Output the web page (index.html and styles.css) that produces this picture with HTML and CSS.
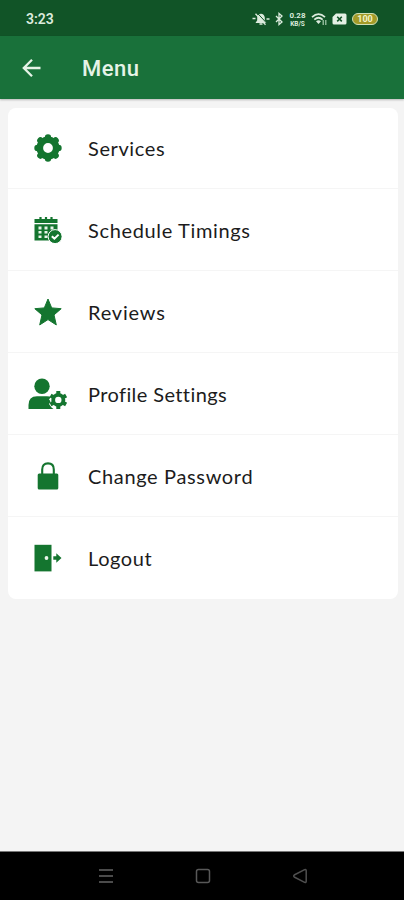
FILE: index.html
```html
<!DOCTYPE html>
<html lang="en">
<head>
	<meta charset="utf-8">
	<meta name="viewport" content="width=device-width, initial-scale=1">
	<title>Menu</title>
	<link rel="stylesheet" href="styles.css">
</head>
<body>
	<div class="statusbar">
		<span class="time">3:23</span>
		<div class="status-icons">
			<svg width="18" height="14" viewBox="0 0 18 14">
				<path d="M3.5 11L5.2 8.2V5.5C5.5 3.2 7 1.8 9 1.8S12.5 3.2 12.8 5.5V8.2L14.5 11Z" fill="#dcebdd"/>
				<path d="M7.5 12H10.5M0.5 6.5H3.5M14.5 7H17.5" stroke="#dcebdd" stroke-width="1.7"/>
				<path d="M6 1.8L15.5 12" stroke="#115427" stroke-width="1"/>
				<path d="M3.5 1.8L13.5 12.8" stroke="#dcebdd" stroke-width="1.3"/>
			</svg>
			<svg class="bluetooth" width="8" height="14" viewBox="0 0 8 14">
				<path d="M1 4L7 10L4 12.5V1.5L7 4L1 10" fill="none" stroke="#dcebdd" stroke-width="1.3"/>
			</svg>
			<div class="speed"><span>0.28</span><span>KB/S</span></div>
			<svg class="wifi" width="17" height="14" viewBox="0 0 17 14">
				<path d="M1 5.2Q7.5 -1 14 5.2M3.3 7.7Q7.5 3.8 11.7 7.7" fill="none" stroke="#dcebdd" stroke-width="1.7"/>
				<path d="M5 9.2Q7.5 7.2 10 9.2L7.5 12Z" fill="#dcebdd"/>
				<path d="M12.2 8V13M14.8 8V13" stroke="#a9cdb1" stroke-width="1.2"/>
			</svg>
			<svg class="sim" width="15" height="12" viewBox="0 0 15 12">
				<path d="M4 0.5H13Q14.5 0.5 14.5 2V10Q14.5 11.5 13 11.5H2Q0.5 11.5 0.5 10V4Z" fill="#e4f0e4"/>
				<path d="M5.2 3.8L9.8 8.4M9.8 3.8L5.2 8.4" stroke="#115427" stroke-width="1.6"/>
			</svg>
			<div class="battery">100</div>
		</div>
	</div>
	<header class="appbar">
		<svg class="back" width="20" height="20" viewBox="0 0 20 20">
			<path d="M18.5 10H2M10 1.8L1.8 10L10 18.2" fill="none" stroke="#e6f3e7" stroke-width="2.3"/>
		</svg>
		<h1>Menu</h1>
	</header>
	<main>
		<ul class="menu">
			<li>
				<span class="icon">
					<svg width="28" height="28" viewBox="-14 -14 28 28">
						<g fill="none" stroke="#14752f">
							<circle r="8.2" stroke-width="6.6"/>
							<g stroke-width="6.4" stroke-linecap="round" stroke-linejoin="round">
								<path d="M0 -10V-10.5M0 10V10.5M-10 0H-10.5M10 0H10.5M-7.2 -7.2L-7.6 -7.6M7.2 -7.2L7.6 -7.6M-7.2 7.2L-7.6 7.6M7.2 7.2L7.6 7.6"/>
							</g>
						</g>
					</svg>
				</span>
				<span class="label services">Services</span>
			</li>
			<li>
				<span class="icon">
					<svg width="28" height="28" viewBox="0 0 28 28">
						<path d="M0.5 3H23.5V7H0.5ZM0.5 8.2H23.5V24.5H0.5Z" fill="#14752f"/>
						<path d="M6.5 1V4M12 1V4M17.5 1V4" stroke="#14752f" stroke-width="2.2"/>
						<path d="M4.5 10.5H7.5V13.5H4.5ZM10.5 10.5H13.5V13.5H10.5ZM16.5 10.5H19.5V13.5H16.5ZM4.5 15H7.5V17.5H4.5ZM10.5 15H13.5V17.5H10.5ZM4.5 19.5H7.5V22H4.5ZM10.5 19.5H13.5V22H10.5Z" fill="#e9f5eb"/>
						<circle cx="21.1" cy="20.6" r="7" fill="#14752f" stroke="#fff" stroke-width="1"/>
						<path d="M17.8 20.3L20.4 22.6L24.6 18.6" fill="none" stroke="#fff" stroke-width="2"/>
					</svg>
				</span>
				<span class="label schedule">Schedule Timings</span>
			</li>
			<li>
				<span class="icon">
					<svg width="28" height="28" viewBox="0 0 28 28">
						<path d="M14 1L17.7 9.9L27.2 10.7L20 16.9L22.3 26.9L14 21.6L5.7 26.9L8 16.9L0.8 10.7L10.3 9.9Z" fill="#14752f" stroke="#14752f" stroke-width="1" stroke-linejoin="round"/>
					</svg>
				</span>
				<span class="label reviews">Reviews</span>
			</li>
			<li>
				<span class="icon">
					<svg width="40" height="32" viewBox="0 0 40 32">
						<circle cx="14" cy="8.3" r="7.7" fill="#14752f"/>
						<path d="M0.5 31V27Q0.5 18.2 9 18.2H19Q22 18.2 23 19L21 21.5L22.8 23.5L21 26L23.5 29.5L25.5 31Z" fill="#14752f"/>
						<g transform="translate(30.3 21.9)" fill="none">
							<circle r="8.2" fill="#fff"/>
							<circle r="5.1" stroke="#14752f" stroke-width="3.8"/>
							<path d="M0 -6V-9M0 6V9M-5.2 -3L-7.8 -4.5M5.2 3L7.8 4.5M5.2 -3L7.8 -4.5M-5.2 3L-7.8 4.5" stroke="#14752f" stroke-width="4"/>
						</g>
					</svg>
				</span>
				<span class="label profile">Profile Settings</span>
			</li>
			<li>
				<span class="icon">
					<svg width="28" height="28" viewBox="0 0 28 28">
						<rect x="3.7" y="11.5" width="20.6" height="16" rx="1.5" fill="#14752f"/>
						<path d="M8.2 12V7.5Q8.2 1.4 14 1.4T19.8 7.5V12" fill="none" stroke="#14752f" stroke-width="2.1"/>
					</svg>
				</span>
				<span class="label password">Change Password</span>
			</li>
			<li>
				<span class="icon">
					<svg width="28" height="28" viewBox="0 0 28 28">
						<rect x="0.5" y="0.8" width="17" height="26.6" fill="#14752f"/>
						<circle cx="12.5" cy="14" r="1.9" fill="#e9f5eb"/>
						<path d="M19.3 12.3H22.3V9.2L27.5 14L22.3 18.8V15.7H19.3Z" fill="#14752f"/>
					</svg>
				</span>
				<span class="label logout">Logout</span>
			</li>
		</ul>
	</main>
	<nav class="navbar">
		<svg width="16" height="16" viewBox="0 0 16 16">
			<path d="M1 2H15M1 8H15M1 14H15" stroke="#4b4b4b" stroke-width="2"/>
		</svg>
		<svg width="16" height="16" viewBox="0 0 16 16">
			<rect x="1.5" y="1.5" width="13" height="13" rx="2" fill="none" stroke="#585858" stroke-width="1.5"/>
		</svg>
		<svg width="16" height="16" viewBox="0 0 16 16">
			<path d="M1.8 8Q1.5 7.5 2.2 7L12.6 1.7Q14.2 1.2 14.2 2.8V13.2Q14.2 14.8 12.6 14.3L2.2 9Q1.5 8.5 1.8 8Z" fill="none" stroke="#4f4f4f" stroke-width="1.5"/>
		</svg>
	</nav>
</body>
</html>
```

FILE: styles.css
```css
body{
	margin: 0;
	height: 900px;
	display: flex;
	flex-direction: column;
	background-color: #f4f4f4;
	font-family: Lato, "Open Sans", sans-serif;
	overflow: hidden;
}
svg{
	display: block;
	flex-shrink: 0;
}
.statusbar{
	height: 36px;
	box-sizing: border-box;
	padding: 2px 26px 0 26px;
	display: flex;
	align-items: center;
	justify-content: space-between;
	background-color: #115427;
	color: #dcebdd;
}
.time{
	font-family: Roboto, sans-serif;
	font-size: 14px;
	font-weight: 600;
}
.status-icons{
	display: flex;
	align-items: center;
}
.bluetooth{
	margin-left: 5px;
}
.speed{
	width: 19px;
	margin-left: 5px;
	display: flex;
	flex-direction: column;
	align-items: center;
	font-family: Roboto, sans-serif;
	font-weight: 700;
	font-size: 8px;
	line-height: 9px;
}
.speed span + span{
	font-size: 6.5px;
	line-height: 8px;
}
.wifi{
	margin-left: 4px;
}
.sim{
	margin-left: 4px;
}
.battery{
	width: 24px;
	height: 10px;
	margin-left: 5px;
	border: 1px solid #cfe0b5;
	border-radius: 6px;
	background-color: #a39b28;
	color: #f1f3c8;
	font-family: Roboto, sans-serif;
	font-size: 9px;
	font-weight: 700;
	line-height: 10px;
	text-align: center;
}
.appbar{
	height: 63px;
	display: flex;
	align-items: center;
	background-color: #19713a;
	box-shadow: 0 1px 2px rgba(0, 0, 0, 0.25);
}
.back{
	margin-left: 22px;
}
h1{
	margin: 0 0 0 40px;
	padding-top: 2px;
	color: #e6f3e7;
	font-family: Roboto, sans-serif;
	font-size: 22px;
	font-weight: 500;
	letter-spacing: 0.5px;
}
main{
	flex: 1;
	padding: 9px 6px 0 8px;
}
.menu{
	margin: 0;
	padding: 0;
	list-style: none;
	background-color: #fff;
	border-radius: 8px;
}
.menu li{
	height: 82px;
	box-sizing: border-box;
	display: flex;
	align-items: center;
	border-bottom: 1px solid #f5f5f5;
}
.menu li:first-child{
	height: 81px;
}
.menu li:last-child{
	border-bottom: none;
}
.icon{
	width: 40px;
	margin-left: 19.5px;
	display: flex;
	justify-content: center;
}
.label{
	margin-left: 20.5px;
	color: #1c1c1c;
	font-size: 20px;
	letter-spacing: 0.6px;
}
.schedule, .password{
	letter-spacing: 0.65px;
}
.reviews{
	letter-spacing: 0.8px;
}
.profile{
	letter-spacing: 0.4px;
}
.navbar{
	height: 48px;
	border-top: 1px solid #777;
	display: flex;
	align-items: center;
	gap: 81px;
	padding-left: 98px;
	background-color: #000;
}
```
